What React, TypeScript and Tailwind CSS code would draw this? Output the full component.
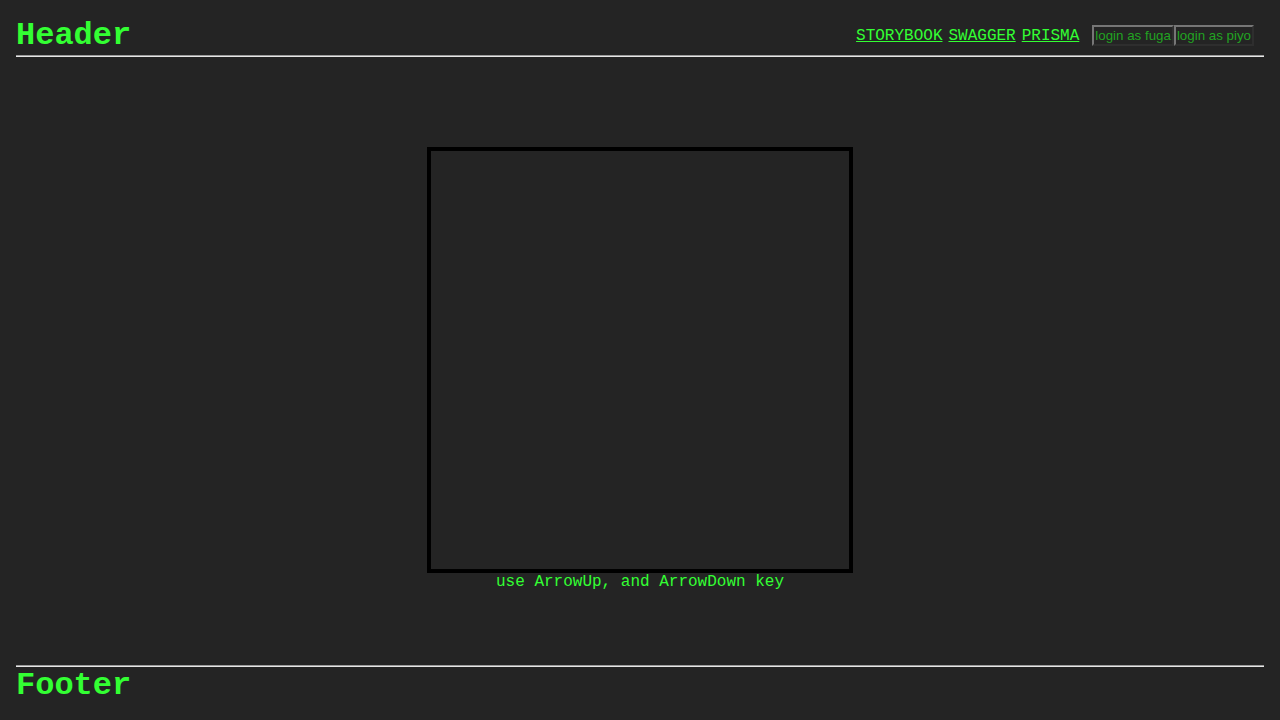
import React from "react";

const mono = { fontFamily: '"Liberation Mono", "DejaVu Sans Mono", monospace' };

function Rule() {
  return <div className="h-[2px] w-full border-t border-t-[#9a9a9a] border-b border-b-[#e6e6e6]" />;
}

export default function App() {
  return (
    <div
      className="min-h-screen w-full bg-[#242424] text-[#33ff33] px-4 pt-4 flex flex-col"
      style={mono}
    >
      <header className="flex items-center justify-between h-[39px]">
        <h1 className="text-[32px] font-bold leading-[36px]">Header</h1>
        <div className="flex items-center pr-[10px]">
          <nav className="flex gap-[6px] text-[16px] mr-[13px]">
            <a href="#" className="underline">STORYBOOK</a>
            <a href="#" className="underline">SWAGGER</a>
            <a href="#" className="underline">PRISMA</a>
          </nav>
          <button
            className="h-[21px] px-[1px] text-[13.33px] leading-[15px] text-[#22a322] bg-[#242424] border-2 border-t-[#767676] border-l-[#767676] border-r-[#2e2e2e] border-b-[#2e2e2e]"
            style={{ fontFamily: '"Liberation Sans", Arial, sans-serif' }}
          >
            login as fuga
          </button>
          <button
            className="h-[21px] px-[1px] text-[13.33px] leading-[15px] text-[#22a322] bg-[#242424] border-2 border-t-[#767676] border-l-[#767676] border-r-[#2e2e2e] border-b-[#2e2e2e]"
            style={{ fontFamily: '"Liberation Sans", Arial, sans-serif' }}
          >
            login as piyo
          </button>
        </div>
      </header>
      <Rule />
      <main className="flex-1 flex flex-col items-center justify-center pt-[15px]">
        <div className="w-[426px] h-[426px] border-4 border-black" />
        <p className="text-[16px] leading-[18px]">use ArrowUp, and ArrowDown key</p>
      </main>
      <Rule />
      <footer className="pb-[17px]">
        <h2 className="text-[32px] font-bold leading-[36px] pt-[1px] -mb-[1px]">Footer</h2>
      </footer>
    </div>
  );
}
